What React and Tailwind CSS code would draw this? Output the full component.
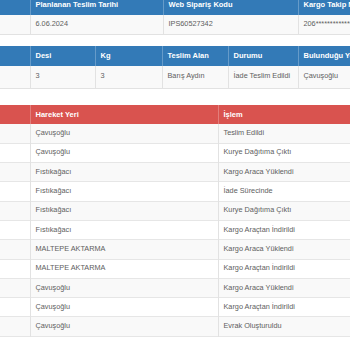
import React from 'react';

const hareketler = [
  ['Çavuşoğlu', 'Teslim Edildi'],
  ['Çavuşoğlu', 'Kurye Dağıtıma Çıktı'],
  ['Fıstıkağacı', 'Kargo Araca Yüklendi'],
  ['Fıstıkağacı', 'İade Sürecinde'],
  ['Fıstıkağacı', 'Kurye Dağıtıma Çıktı'],
  ['Fıstıkağacı', 'Kargo Araçtan İndirildi'],
  ['MALTEPE AKTARMA', 'Kargo Araca Yüklendi'],
  ['MALTEPE AKTARMA', 'Kargo Araçtan İndirildi'],
  ['Çavuşoğlu', 'Kargo Araca Yüklendi'],
  ['Çavuşoğlu', 'Kargo Araçtan İndirildi'],
  ['Çavuşoğlu', 'Evrak Oluşturuldu'],
];

function Th({ children, className = '' }) {
  return (
    <th className={`border-l border-white/25 px-[5px] text-left align-middle text-[7.5px] font-bold text-white whitespace-nowrap ${className}`}>
      {children}
    </th>
  );
}

function Td({ children, className = '' }) {
  return (
    <td className={`border-l border-[#e2e2e2] px-[5px] align-middle text-[7.3px] text-[#606060] whitespace-nowrap overflow-hidden ${className}`}>
      {children}
    </td>
  );
}

export default function App() {
  return (
    <div className="w-[350px] h-[350px] overflow-hidden bg-white font-['Liberation_Sans',Arial,sans-serif]">
      <div className="-mt-[5px] flex flex-col">
        {/* Teslim bilgisi */}
        <table className="table-fixed border-collapse w-[420px]">
          <colgroup>
            <col className="w-[30px]" />
            <col className="w-[133px]" />
            <col className="w-[135px]" />
            <col className="w-[122px]" />
          </colgroup>
          <thead>
            <tr className="h-[20px] bg-[#337ab7]">
              <Th className="border-l-0"></Th>
              <Th>Planlanan Teslim Tarihi</Th>
              <Th>Web Sipariş Kodu</Th>
              <Th>Kargo Takip No</Th>
            </tr>
          </thead>
          <tbody>
            <tr className="h-[19px] bg-[#f9f9f9] border-b border-[#e2e2e2]">
              <Td className="border-l-0"></Td>
              <Td>6.06.2024</Td>
              <Td>IPS60527342</Td>
              <Td>206**************</Td>
            </tr>
          </tbody>
        </table>

        {/* Gönderi detayı */}
        <table className="table-fixed border-collapse w-[420px] mt-[11px]">
          <colgroup>
            <col className="w-[30px]" />
            <col className="w-[65px]" />
            <col className="w-[67px]" />
            <col className="w-[66px]" />
            <col className="w-[70px]" />
            <col className="w-[122px]" />
          </colgroup>
          <thead>
            <tr className="h-[20px] bg-[#337ab7]">
              <Th className="border-l-0"></Th>
              <Th>Desi</Th>
              <Th>Kg</Th>
              <Th>Teslim Alan</Th>
              <Th>Durumu</Th>
              <Th>Bulunduğu Yer</Th>
            </tr>
          </thead>
          <tbody>
            <tr className="h-[23px] bg-[#f9f9f9] border-b border-[#e2e2e2]">
              <Td className="border-l-0"></Td>
              <Td>3</Td>
              <Td>3</Td>
              <Td>Barış Aydın</Td>
              <Td>İade Teslim Edildi</Td>
              <Td>Çavuşoğlu</Td>
            </tr>
          </tbody>
        </table>

        {/* Hareketler */}
        <table className="table-fixed border-collapse w-[420px] mt-[16px]">
          <colgroup>
            <col className="w-[30px]" />
            <col className="w-[188px]" />
            <col className="w-[202px]" />
          </colgroup>
          <thead>
            <tr className="h-[19px] bg-[#d9534f]">
              <Th className="border-l-0"></Th>
              <Th>Hareket Yeri</Th>
              <Th>İşlem</Th>
            </tr>
          </thead>
          <tbody>
            {hareketler.map(([yer, islem], i) => (
              <tr key={i} className={`h-[19.3px] border-b border-[#e6e6e6] ${i % 2 === 0 ? 'bg-[#f9f9f9]' : 'bg-white'}`}>
                <Td className="border-l-0"></Td>
                <Td>{yer}</Td>
                <Td>{islem}</Td>
              </tr>
            ))}
          </tbody>
        </table>
      </div>
    </div>
  );
}
